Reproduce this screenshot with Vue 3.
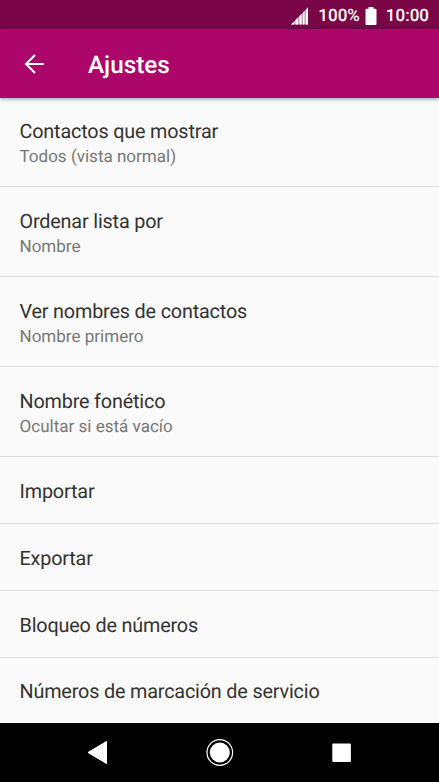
<script setup>
const items = [
  { title: 'Contactos que mostrar', sub: 'Todos (vista normal)' },
  { title: 'Ordenar lista por', sub: 'Nombre' },
  { title: 'Ver nombres de contactos', sub: 'Nombre primero' },
  { title: 'Nombre fonético', sub: 'Ocultar si está vacío' },
  { title: 'Importar' },
  { title: 'Exportar' },
  { title: 'Bloqueo de números' },
  { title: 'Números de marcación de servicio' },
]
</script>

<template>
  <div class="screen">
    <header class="status">
      <svg class="signal" width="18" height="18" viewBox="0 0 18 18">
        <path d="M0 17.500L17 .5v17z" fill="#fff" fill-opacity=".6" />
        <path d="M0 17.500l3-3v3zM4.500 17.500V13L7 10.500v7zM8.500 17.500V9L10.500 7v10.500zM12 17.500v-12l1.500-1.500v13.500zM15 17.500v-15L17 .5v17z" fill="#fff" />
      </svg>
      <span class="percent">100%</span>
      <svg class="battery" width="12" height="18" viewBox="0 0 12 18">
        <path d="M3.500 0h5v1.800h2q1 0 1 1V17q0 1-1 1h-9q-1 0-1-1V2.800q0-1 1-1h2z" fill="#fff" />
      </svg>
      <span class="time">10:00</span>
    </header>
    <div class="appbar">
      <svg class="back" width="20" height="20" viewBox="0 0 20 20">
        <path d="M11 1L2 10l9 9M1.500 10H20" fill="none" stroke="#fff" stroke-width="2.200" />
      </svg>
      <h1>Ajustes</h1>
    </div>
    <main class="list">
      <section v-for="item in items" :key="item.title" class="item" :class="{ double: item.sub }">
        <div class="title">{{ item.title }}</div>
        <div v-if="item.sub" class="sub">{{ item.sub }}</div>
      </section>
    </main>
    <nav class="nav">
      <svg width="122" height="58" viewBox="0 0 122 58"><path d="M51 29.500L69.500 18.500v22z" fill="#fff" stroke="#fff" stroke-width="1" stroke-linejoin="round" /></svg>
      <svg width="122" height="58" viewBox="0 0 122 58">
        <circle cx="60.800" cy="29.500" r="12.800" fill="none" stroke="#fff" stroke-width="1.200" />
        <circle cx="60.800" cy="29.500" r="10" fill="#fff" />
      </svg>
      <svg width="122" height="58" viewBox="0 0 122 58"><rect x="51.300" y="20.500" width="18.600" height="18.600" rx="1" fill="#fff" /></svg>
    </nav>
  </div>
</template>

<style>
body { margin: 0; overflow: hidden; }
</style>

<style scoped>
.screen { width: 439px; height: 782px; display: flex; flex-direction: column; overflow: hidden; background: #fafafa; font-family: Roboto, sans-serif; text-rendering: geometricPrecision; }
.status { height: 29px; flex: none; display: flex; align-items: center; justify-content: flex-end; padding: 2px 10px 0 0; box-sizing: border-box; background: #7a0648; color: #fff; font-size: 17px; font-weight: 500; }
.percent { margin-left: 10px; }
.battery { margin-left: 5px; }
.time { margin-left: 9px; }
.signal { margin-right: -.5px; }
.appbar { height: 69px; flex: none; display: flex; align-items: center; padding-left: 24px; background: #ac066a; color: #fff; box-shadow: 0 1px 4px rgba(0,0,0,.4); z-index: 1; }
h1 { margin: 3px 0 0 44px; font-size: 24.3px; line-height: 30px; font-weight: 500; }
.list { flex: 1; min-height: 0; overflow: hidden; }
.item { height: 66.900px; box-sizing: border-box; padding: 22px 19.500px 0; border-bottom: 1px solid #dcdcdc; }
.item.double { height: 90px; padding-top: 22px; }
.item:first-child { height: 89px; padding-top: 21px; }
.item:last-child { padding-top: 21px; }
.title { font-size: 19.800px; line-height: 26px; letter-spacing: -.165px; color: #333; }
.sub { font-size: 17.050px; line-height: 24px; color: #777; }
.nav { height: 59px; flex: none; display: flex; justify-content: center; background: #000; }
</style>
